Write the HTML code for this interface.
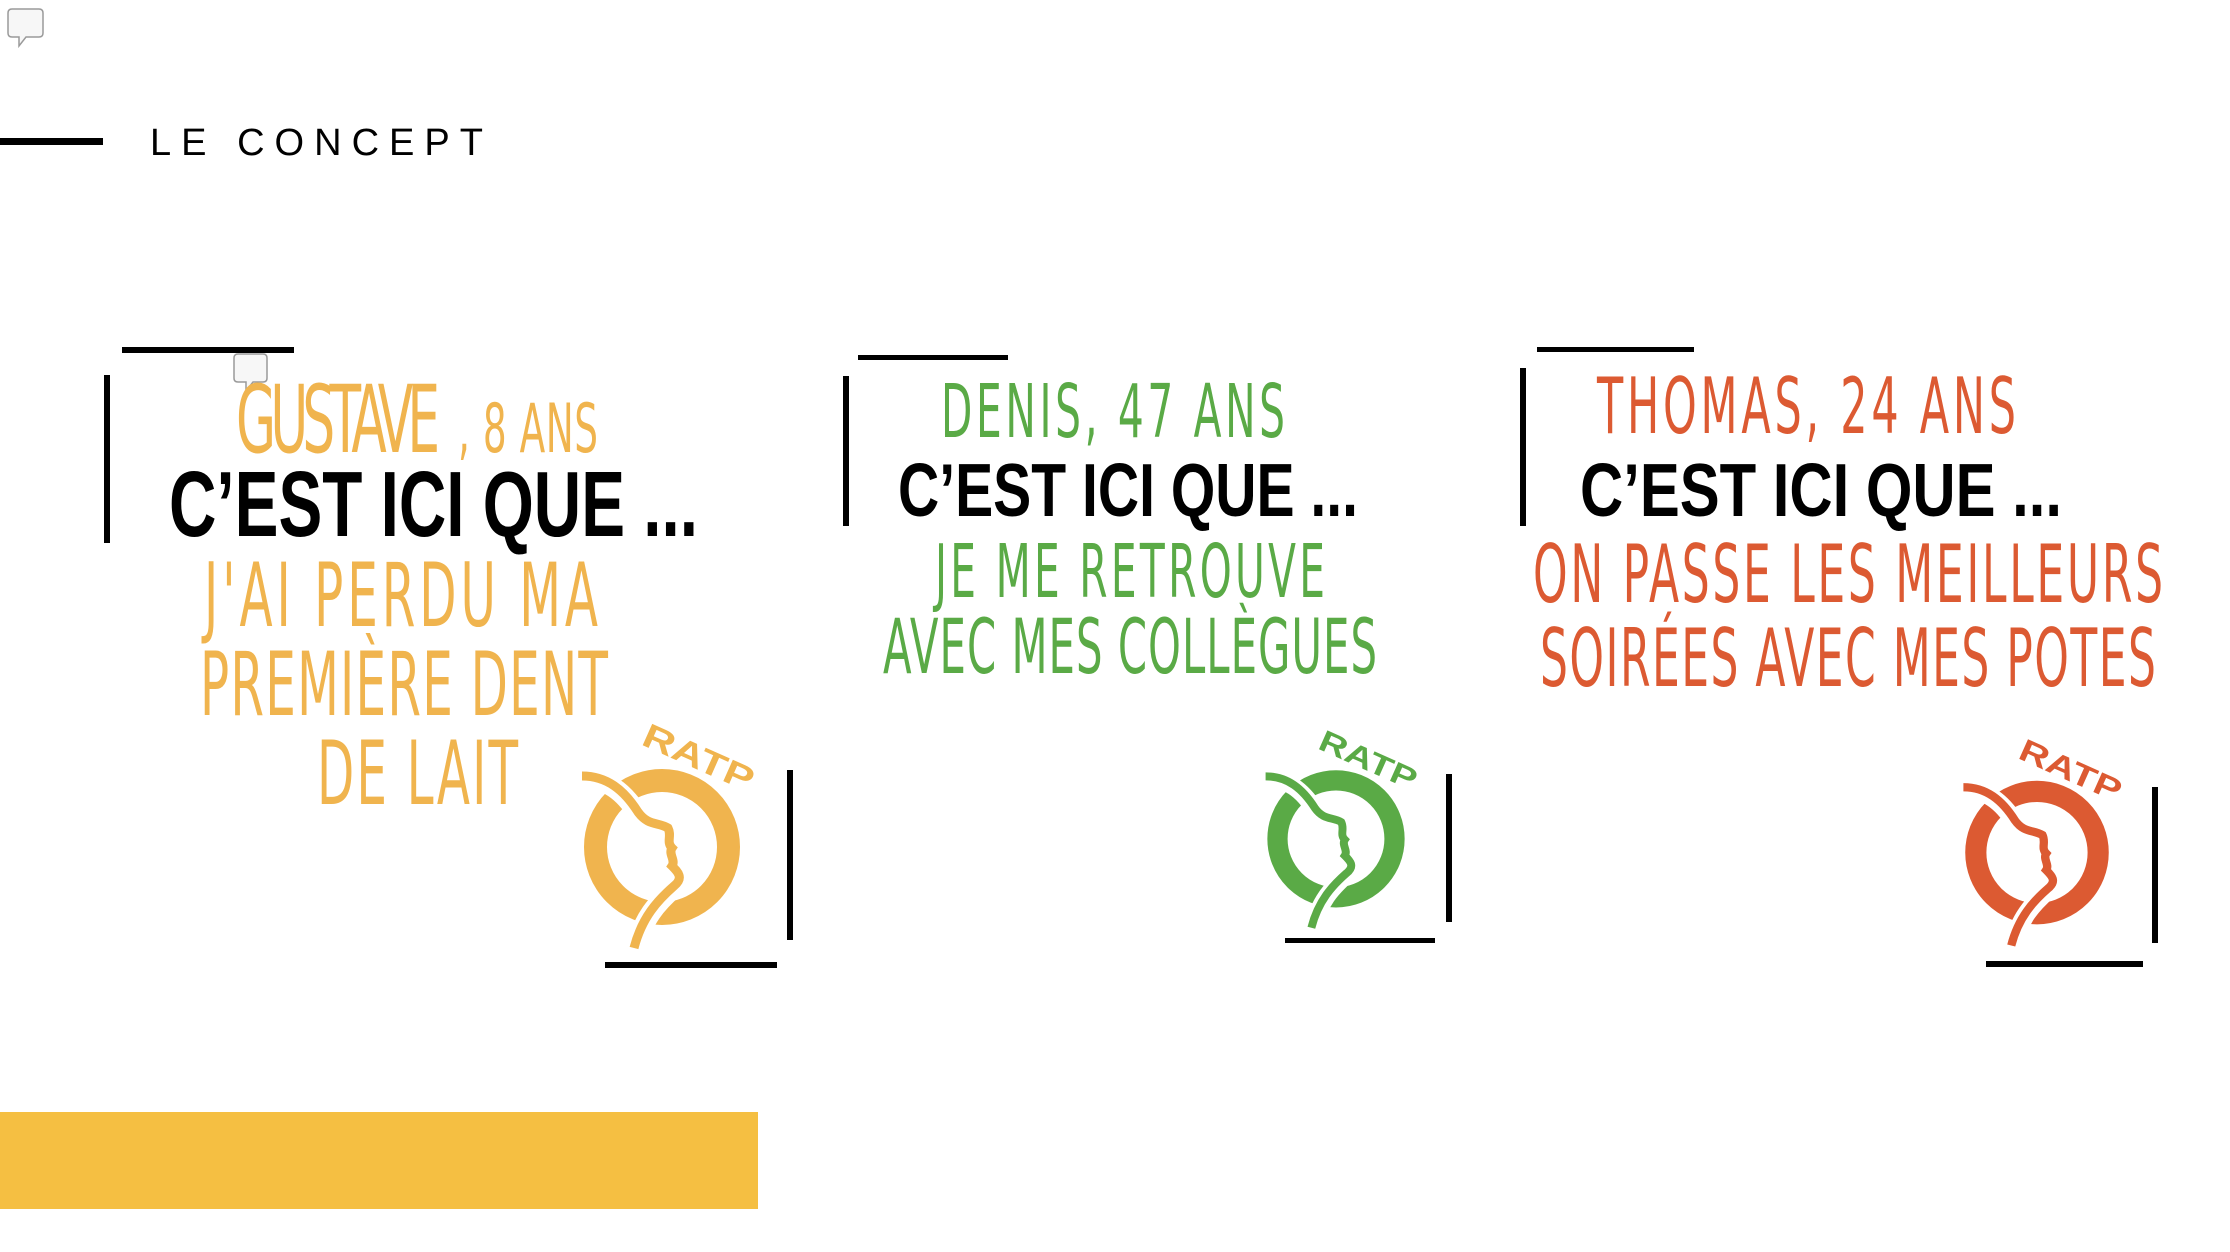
<!DOCTYPE html>
<html><head><meta charset="utf-8"><style>html,body{margin:0;padding:0;background:#fff;width:2230px;height:1252px;overflow:hidden}</style></head>
<body>
<svg width="2230" height="1252" viewBox="0 0 2230 1252" xmlns="http://www.w3.org/2000/svg">
<defs>
<g id="logo">
  <circle cx="100" cy="143" r="66.5" fill="none" stroke="currentColor" stroke-width="23"/>
  <path d="M18 74 C45 74 62 88 76 110 C86 124 96 120 106 126 C110 134 104 140 110 146 C106 152 114 158 110 164 C116 170 122 176 112 184 C96 198 80 215 74 245" fill="none" stroke="#fff" stroke-width="20" stroke-linecap="round"/>
  <path d="M20 72 C45 72 62 86 76 108 C86 122 96 118 106 124 C110 132 104 138 110 144 C106 150 114 156 110 162 C116 168 122 174 112 182 C96 196 80 213 72 244" fill="none" stroke="currentColor" stroke-width="9"/>
</g>
</defs>

<!-- comment icon -->
<path d="M12 9 H39 Q43 9 43 13 V33 Q43 37 39 37 H26 L19 46 L19 37 H12 Q8 37 8 33 V13 Q8 9 12 9 Z" fill="#f7f7f7" stroke="#9a9a9a" stroke-width="1.5"/>

<!-- header -->
<rect x="0" y="138" width="103" height="7" fill="#000"/>
<text x="150" y="155" font-family="Liberation Sans, sans-serif" font-size="38" textLength="333" lengthAdjust="spacing" fill="#000">LE CONCEPT</text>

<!-- panel 1 -->
<rect x="122" y="347" width="172" height="6" fill="#000"/>
<rect x="104" y="375" width="6" height="168" fill="#000"/>
<path d="M238 354 H263 Q267 354 267 358 V378 Q267 382 263 382 H253 L246 391 L246 382 H238 Q234 382 234 378 V358 Q234 354 238 354 Z" fill="#f7f7f7" stroke="#9a9a9a" stroke-width="1.5"/>
<g transform="scale(0.55,1)" font-family="DejaVu Sans, sans-serif" fill="#F0B44E">
<text x="429.1" y="452" font-size="94" textLength="370.9" lengthAdjust="spacing">GUSTAVE</text>
<text x="832.7" y="452" font-size="68" textLength="254.5" lengthAdjust="spacing">, 8 ANS</text>
<text x="370.9" y="626" font-size="88" textLength="716.4" lengthAdjust="spacing">J'AI PERDU MA</text>
<text x="363.6" y="715" font-size="88" textLength="741.8" lengthAdjust="spacing">PREMIÈRE DENT</text>
<text x="576.4" y="804" font-size="88" textLength="365.5" lengthAdjust="spacing">DE LAIT</text>
</g>
<text x="169" y="536" font-family="Liberation Sans, sans-serif" font-weight="bold" font-size="93" textLength="529" lengthAdjust="spacingAndGlyphs" fill="#000">C’EST ICI QUE ...</text>
<g color="#F0B44E" fill="#F0B44E" transform="translate(562,704)">
  <use href="#logo"/>
  <text x="78" y="40" font-family="Liberation Sans, sans-serif" font-weight="bold" font-size="34" transform="rotate(24 78 40)" textLength="118" lengthAdjust="spacingAndGlyphs">RATP</text>
</g>
<rect x="787" y="770" width="6" height="170" fill="#000"/>
<rect x="605" y="962" width="172" height="6" fill="#000"/>

<!-- panel 2 -->
<g transform="translate(-5,0)">
<rect x="863" y="355" width="150" height="5" fill="#000"/>
<rect x="848" y="376" width="6" height="150" fill="#000"/>
<g transform="scale(0.55,1)" font-family="DejaVu Sans, sans-serif" fill="#5AAA46">
<text x="1720" y="437" font-size="74" textLength="625.5" lengthAdjust="spacing">DENIS, 47 ANS</text>
<text x="1709.1" y="597" font-size="74" textLength="709.1" lengthAdjust="spacing">JE ME RETROUVE</text>
<text x="1614.5" y="673" font-size="76" textLength="898.2" lengthAdjust="spacing">AVEC MES COLLÈGUES</text>
</g>
<text x="903" y="516" font-family="Liberation Sans, sans-serif" font-weight="bold" font-size="75" textLength="460" lengthAdjust="spacingAndGlyphs" fill="#000">C’EST ICI QUE ...</text>
<g color="#5AAA46" fill="#5AAA46" transform="translate(1253,713) scale(0.88)">
  <use href="#logo"/>
  <text x="78" y="40" font-family="Liberation Sans, sans-serif" font-weight="bold" font-size="34" transform="rotate(24 78 40)" textLength="118" lengthAdjust="spacingAndGlyphs">RATP</text>
</g>
<rect x="1451" y="774" width="6" height="148" fill="#000"/>
<rect x="1290" y="938" width="150" height="5" fill="#000"/>
</g>

<!-- panel 3 -->
<g transform="translate(-7,0)">
<rect x="1544" y="347" width="157" height="5" fill="#000"/>
<rect x="1527" y="368" width="6" height="158" fill="#000"/>
<g transform="scale(0.55,1)" font-family="DejaVu Sans, sans-serif" fill="#DC5A32">
<text x="2916.4" y="433" font-size="78" textLength="761.8" lengthAdjust="spacing">THOMAS, 24 ANS</text>
<text x="2800" y="602" font-size="80" textLength="1145.5" lengthAdjust="spacing">ON PASSE LES MEILLEURS</text>
<text x="2812.7" y="686" font-size="80" textLength="1120" lengthAdjust="spacing">SOIRÉES AVEC MES POTES</text>
</g>
<text x="1587" y="516" font-family="Liberation Sans, sans-serif" font-weight="bold" font-size="75" textLength="482" lengthAdjust="spacingAndGlyphs" fill="#000">C’EST ICI QUE ...</text>
</g>
<g color="#DC5A32" fill="#DC5A32" transform="translate(1945,721) scale(0.92)">
  <use href="#logo"/>
  <text x="78" y="40" font-family="Liberation Sans, sans-serif" font-weight="bold" font-size="34" transform="rotate(24 78 40)" textLength="118" lengthAdjust="spacingAndGlyphs">RATP</text>
</g>
<rect x="2152" y="787" width="6" height="156" fill="#000"/>
<rect x="1986" y="961" width="157" height="6" fill="#000"/>

<!-- yellow bar -->
<rect x="0" y="1112" width="758" height="97" fill="#F5BF42"/>
</svg>
</body></html>
